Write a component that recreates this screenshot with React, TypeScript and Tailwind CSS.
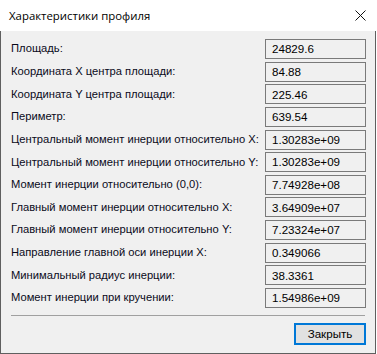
import React from "react";

const rows: [string, string][] = [
  ["Площадь:", "24829.6"],
  ["Координата X центра площади:", "84.88"],
  ["Координата Y центра площади:", "225.46"],
  ["Периметр:", "639.54"],
  ["Центральный момент инерции относительно X:", "1.30283e+09"],
  ["Центральный момент инерции относительно Y:", "1.30283e+09"],
  ["Момент инерции относительно (0,0):", "7.74928e+08"],
  ["Главный момент инерции относительно X:", "3.64909e+07"],
  ["Главный момент инерции относительно Y:", "7.23324e+07"],
  ["Направление главной оси инерции X:", "0.349066"],
  ["Минимальный радиус инерции:", "38.3361"],
  ["Момент инерции при кручении:", "1.54986e+09"],
];

export default function App() {
  return (
    <div className="w-[377px] h-[354px] bg-white font-['Liberation_Sans',sans-serif] text-black">
      <div className="w-[376px] h-[354px] flex flex-col">
        {/* title bar */}
        <div className="h-[31px] bg-white flex items-center justify-between pl-[9px] pr-[10px]">
          <span className="text-[11.4px] font-['Open_Sans',sans-serif] text-black whitespace-nowrap">
            Характеристики профиля
          </span>
          <svg width="11" height="11" viewBox="0 0 11 11">
            <path d="M0.5 0.5L10.5 10.5M10.5 0.5L0.5 10.5" stroke="#111" strokeWidth="1" />
          </svg>
        </div>

        <div className="flex-1 bg-[#f0f0f0] border-l border-r border-b border-[#5f5f5f] pt-[8px] pl-[10px] pr-[9px] flex flex-col">
          <div className="flex flex-col gap-[2.64px]">
            {rows.map(([label, value]) => (
              <div key={label} className="flex items-center justify-between h-[20px]">
                <span className="text-[11.2px] leading-none whitespace-nowrap text-[#0a0a1a]">{label}</span>
                <div className="w-[101px] h-[20px] border border-[#7a7a7a] bg-[#f0f0f0] flex items-center pl-[6px] text-[11.6px]">
                  {value}
                </div>
              </div>
            ))}
          </div>

          <div className="mt-[7px] h-[1px] bg-[#a0a0a0] mr-[1px]" />

          <div className="flex justify-end mt-[7px]">
            <button className="w-[72px] h-[22px] border-2 border-[#0078d7] bg-[#e1e1e1] text-[11.6px] flex items-center justify-center">
              Закрыть
            </button>
          </div>
        </div>
      </div>
    </div>
  );
}
